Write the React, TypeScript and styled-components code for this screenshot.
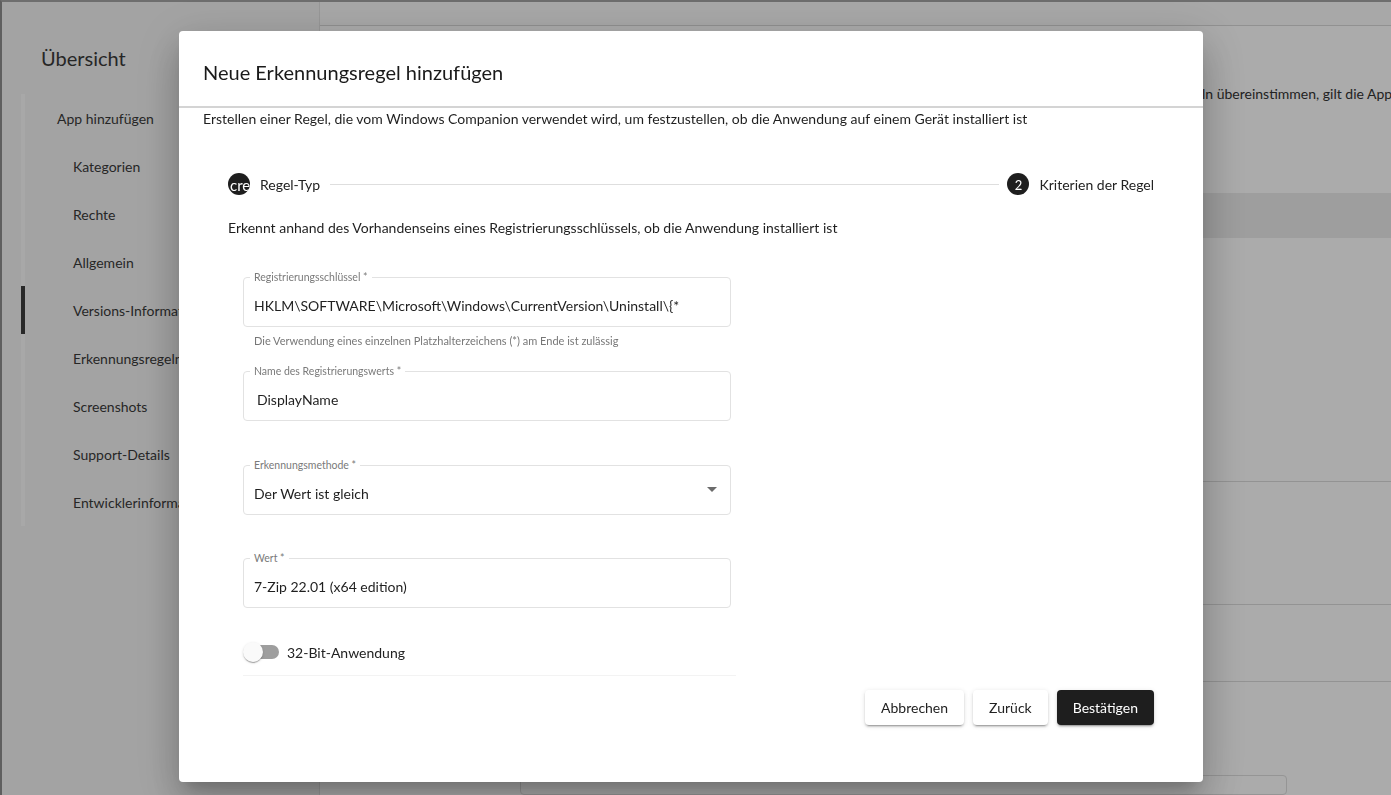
import React from 'react';
import styled, { createGlobalStyle } from 'styled-components';

const Global = createGlobalStyle`
  html, body { margin: 0; padding: 0; }
  body {
    font-family: Lato, "Open Sans", sans-serif;
    background: #fff;
    color: #222;
    overflow: hidden;
  }
  * { box-sizing: border-box; }
`;

const Page = styled.div`
  width: 1391px;
  height: 795px;
  display: flex;
  border-top: 2px solid #a4a4a4;
  border-left: 2px solid #8e8e8e;
  background: #fff;
  overflow: hidden;
`;

const Sidebar = styled.aside`
  width: 318px;
  flex: none;
  background: #f4f4f4;
  border-right: 1px solid #e2e2e2;
  display: flex;
  flex-direction: column;
`;

const SidebarTitle = styled.div`
  margin-top: 42px;
  padding-left: 39px;
  font-size: 20px;
  line-height: 28px;
  color: #3a3a3a;
`;

const NavList = styled.nav`
  margin-top: 22px;
  margin-left: 19px;
  border-left: 4px solid #fbfbfb;
  display: flex;
  flex-direction: column;
`;

const NavItem = styled.div<{ $level: number; $active?: boolean }>`
  height: 48px;
  display: flex;
  align-items: center;
  margin-left: -4px;
  border-left: 4px solid ${(p) => (p.$active ? '#3c3c3c' : 'transparent')};
  padding-left: ${(p) => (p.$level === 0 ? 32 : 48)}px;
  font-size: 14px;
  color: #3a3a3a;
  white-space: nowrap;
`;

const Main = styled.main`
  flex: 1;
  display: flex;
  flex-direction: column;
  min-width: 0;
`;

const TopBar = styled.div`
  height: 24px;
  flex: none;
  background: #fbfbfb;
  border-bottom: 1px solid #d8d8d8;
`;

const Intro = styled.p`
  margin: 58px 0 0;
  padding-left: 561px;
  font-size: 14px;
  line-height: 20px;
  white-space: nowrap;
  color: #333;
`;

const Table = styled.div`
  margin-top: 89px;
  margin-left: 200px;
  display: flex;
  flex-direction: column;
`;

const TableHead = styled.div`
  height: 45px;
  background: #ececec;
`;

const TableRow = styled.div<{ $h: number }>`
  height: ${(p) => p.$h}px;
  border-bottom: 1px solid #dcdcdc;
`;

const FooterCard = styled.div`
  margin: 93px 0 0 200px;
  width: 767px;
  height: 40px;
  border: 1px solid #dedede;
  border-radius: 4px;
  background: #fff;
`;

const Overlay = styled.div`
  position: fixed;
  inset: 0;
  background: rgba(0, 0, 0, 0.33);
  display: flex;
  align-items: flex-start;
  padding: 31px 0 0 179px;
`;

const Dialog = styled.div`
  width: 1024px;
  height: 751px;
  background: #fff;
  border-radius: 4px;
  box-shadow: 0 11px 15px -7px rgba(0, 0, 0, 0.2), 0 24px 38px 3px rgba(0, 0, 0, 0.14),
    0 9px 46px 8px rgba(0, 0, 0, 0.12);
  display: flex;
  flex-direction: column;
  color: #1f1f1f;
`;

const DialogHeader = styled.header`
  height: 77px;
  flex: none;
  padding: 6px 24px 0;
  display: flex;
  align-items: center;
  border-bottom: 2px solid #d4d4d4;
`;

const DialogTitle = styled.h2`
  margin: 0;
  font-size: 20px;
  font-weight: 400;
  color: #1a1a1a;
`;

const DialogBody = styled.div`
  flex: 1;
  padding: 0 24px;
  display: flex;
  flex-direction: column;
`;

const Description = styled.p`
  margin: 1px 0 0;
  font-size: 14px;
  line-height: 20px;
`;

const Content = styled.div`
  padding: 0 25px;
  display: flex;
  flex-direction: column;
`;

const Stepper = styled.div`
  margin-top: 44px;
  height: 22px;
  display: flex;
  align-items: center;
`;

const StepCircle = styled.span<{ $icon?: boolean }>`
  width: 22px;
  height: 22px;
  flex: none;
  border-radius: 50%;
  background: #1e1e1e;
  color: #fff;
  font-size: ${(p) => (p.$icon ? 15 : 13)}px;
  line-height: 24px;
  display: flex;
  justify-content: ${(p) => (p.$icon ? 'flex-start' : 'center')};
  padding-left: ${(p) => (p.$icon ? 2 : 0)}px;
  overflow: hidden;
  white-space: nowrap;
`;

const StepLabel = styled.span`
  margin-left: 10px;
  font-size: 14px;
  color: #222;
  white-space: nowrap;
`;

const StepConnector = styled.span`
  flex: 1;
  height: 1px;
  background: #dedede;
  margin: 0 8px 0 10px;
`;

const StepText = styled.p`
  margin: 23px 0 0;
  font-size: 14px;
  line-height: 20px;
`;

const Form = styled.div`
  margin-top: 39px;
  padding-left: 15px;
  display: flex;
  flex-direction: column;
`;

const FieldGroup = styled.div<{ $slot: number }>`
  width: 488px;
  height: ${(p) => 50 + p.$slot}px;
  display: flex;
  flex-direction: column;
`;

const Field = styled.div`
  position: relative;
  height: 50px;
  flex: none;
  border: 1px solid #e2e2e2;
  border-radius: 4px;
  display: flex;
  align-items: center;
  padding: 7px 6px 0 10px;
`;

const FieldLabel = styled.span`
  position: absolute;
  left: 6px;
  top: -8px;
  padding: 0 4px;
  background: #fff;
  font-size: 10.5px;
  line-height: 14px;
  color: #7a7a7a;
  white-space: nowrap;
`;

const FieldValue = styled.span<{ $indent?: number }>`
  flex: 1;
  padding-left: ${(p) => p.$indent ?? 0}px;
  font-size: 14px;
  color: #1f1f1f;
  white-space: nowrap;
`;

const Caret = styled.svg`
  width: 24px;
  height: 24px;
  flex: none;
  margin-top: -9px;
  fill: #6b6b6b;
`;

const Helper = styled.span`
  margin: 7px 0 0 11px;
  font-size: 11px;
  line-height: 14px;
  color: #777;
`;

const ToggleRow = styled.label`
  height: 24px;
  display: flex;
  align-items: center;
`;

const Switch = styled.span`
  position: relative;
  width: 36px;
  height: 24px;
  flex: none;
`;

const SwitchTrack = styled.span`
  position: absolute;
  left: 2px;
  top: 5px;
  width: 34px;
  height: 14px;
  border-radius: 7px;
  background: #9e9e9e;
`;

const SwitchThumb = styled.span`
  position: absolute;
  left: 0;
  top: 2px;
  width: 20px;
  height: 20px;
  border-radius: 50%;
  background: #fafafa;
  box-shadow: 0 2px 1px -1px rgba(0, 0, 0, 0.2), 0 1px 1px 0 rgba(0, 0, 0, 0.14),
    0 1px 3px 0 rgba(0, 0, 0, 0.12);
`;

const ToggleLabel = styled.span`
  margin-left: 8px;
  font-size: 14px;
  color: #222;
`;

const Divider = styled.div`
  width: 493px;
  height: 1px;
  margin-top: 11px;
  background: #f3f3f3;
`;

const Actions = styled.div`
  margin-top: 14px;
  display: flex;
  justify-content: flex-end;
  gap: 9px;
`;

const Button = styled.button<{ $primary?: boolean }>`
  height: 35px;
  padding: 0 16px;
  border: none;
  border-radius: 4px;
  font-family: inherit;
  font-size: 14px;
  background: ${(p) => (p.$primary ? '#1e1e1e' : '#fff')};
  color: ${(p) => (p.$primary ? '#fff' : '#222')};
  box-shadow: 0 3px 1px -2px rgba(0, 0, 0, 0.2), 0 2px 2px 0 rgba(0, 0, 0, 0.14),
    0 1px 5px 0 rgba(0, 0, 0, 0.12);
`;

const navItems = [
  { label: 'App hinzufügen', level: 0 },
  { label: 'Kategorien', level: 1 },
  { label: 'Rechte', level: 1 },
  { label: 'Allgemein', level: 1 },
  { label: 'Versions-Informationen', level: 1, active: true },
  { label: 'Erkennungsregeln', level: 1 },
  { label: 'Screenshots', level: 1 },
  { label: 'Support-Details', level: 1 },
  { label: 'Entwicklerinformationen', level: 1 },
];

export default function App() {
  return (
    <>
      <Global />
      <Page>
        <Sidebar>
          <SidebarTitle>Übersicht</SidebarTitle>
          <NavList>
            {navItems.map((n) => (
              <NavItem key={n.label} $level={n.level} $active={n.active}>
                {n.label}
              </NavItem>
            ))}
          </NavList>
        </Sidebar>
        <Main>
          <TopBar />
          <Intro>
            Wenn mehrere Regeln angegeben sind und alle Regeln übereinstimmen, gilt die App als installiert.
          </Intro>
          <Table>
            <TableHead />
            <TableRow $h={244} />
            <TableRow $h={123} />
            <TableRow $h={77} />
          </Table>
          <FooterCard />
        </Main>
      </Page>
      <Overlay>
        <Dialog role="dialog">
          <DialogHeader>
            <DialogTitle>Neue Erkennungsregel hinzufügen</DialogTitle>
          </DialogHeader>
          <DialogBody>
            <Description>
              Erstellen einer Regel, die vom Windows Companion verwendet wird, um festzustellen, ob die
              Anwendung auf einem Gerät installiert ist
            </Description>
            <Content>
              <Stepper>
                <StepCircle $icon>create</StepCircle>
                <StepLabel>Regel-Typ</StepLabel>
                <StepConnector />
                <StepCircle>2</StepCircle>
                <StepLabel>Kriterien der Regel</StepLabel>
              </Stepper>
              <StepText>
                Erkennt anhand des Vorhandenseins eines Registrierungsschlüssels, ob die Anwendung
                installiert ist
              </StepText>
              <Form>
                <FieldGroup $slot={44}>
                  <Field>
                    <FieldLabel>Registrierungsschlüssel *</FieldLabel>
                    <FieldValue>HKLM\SOFTWARE\Microsoft\Windows\CurrentVersion\Uninstall\{'{'}*</FieldValue>
                  </Field>
                  <Helper>Die Verwendung eines einzelnen Platzhalterzeichens (*) am Ende ist zulässig</Helper>
                </FieldGroup>
                <FieldGroup $slot={44}>
                  <Field>
                    <FieldLabel>Name des Registrierungswerts *</FieldLabel>
                    <FieldValue $indent={3}>DisplayName</FieldValue>
                  </Field>
                </FieldGroup>
                <FieldGroup $slot={43}>
                  <Field>
                    <FieldLabel>Erkennungsmethode *</FieldLabel>
                    <FieldValue>Der Wert ist gleich</FieldValue>
                    <Caret viewBox="0 0 24 24">
                      <path d="M7 10l5 5 5-5z" />
                    </Caret>
                  </Field>
                </FieldGroup>
                <FieldGroup $slot={32}>
                  <Field>
                    <FieldLabel>Wert *</FieldLabel>
                    <FieldValue>7-Zip 22.01 (x64 edition)</FieldValue>
                  </Field>
                </FieldGroup>
                <ToggleRow>
                  <Switch>
                    <SwitchTrack />
                    <SwitchThumb />
                  </Switch>
                  <ToggleLabel>32-Bit-Anwendung</ToggleLabel>
                </ToggleRow>
                <Divider />
              </Form>
              <Actions>
                <Button>Abbrechen</Button>
                <Button>Zurück</Button>
                <Button $primary>Bestätigen</Button>
              </Actions>
            </Content>
          </DialogBody>
        </Dialog>
      </Overlay>
    </>
  );
}
